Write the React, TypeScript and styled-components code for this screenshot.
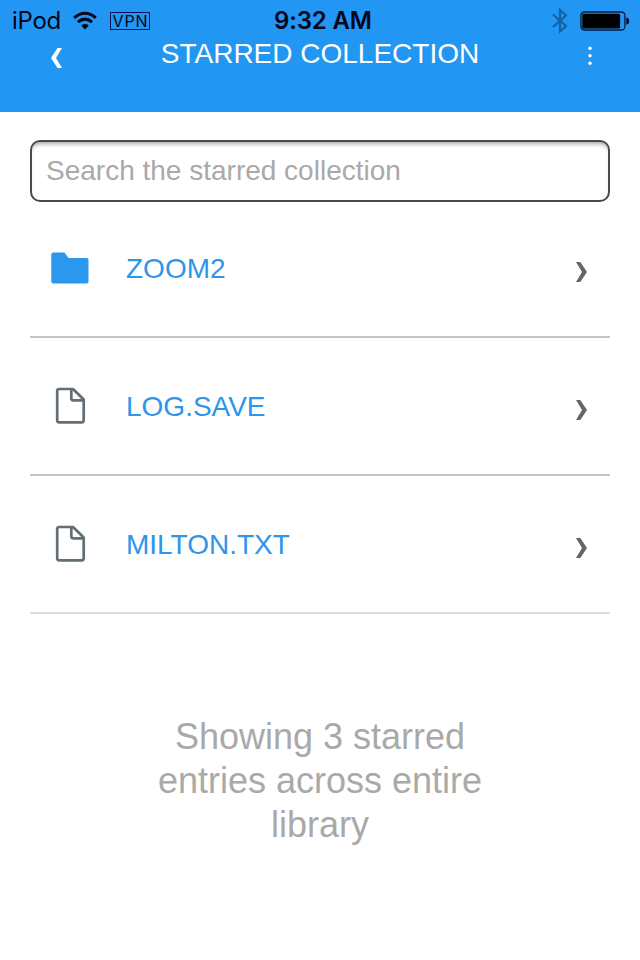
import React from "react";
import styled, { createGlobalStyle } from "styled-components";

const GlobalStyle = createGlobalStyle`
  * { box-sizing: border-box; }
  body { margin: 0; background: #fff; }
`;

const Screen = styled.div`
  width: 640px;
  height: 960px;
  overflow: hidden;
  background: #fff;
  font-family: "Liberation Sans", Arial, sans-serif;
`;

const Header = styled.header`
  height: 112px;
  background: #2196f3;
`;

const StatusBar = styled.div`
  display: grid;
  grid-template-columns: 262px 1fr 256px;
  align-items: center;
  height: 40px;
  padding: 0 10px 0 12px;
  color: #05061a;
  font: 400 24px/40px Inter, sans-serif;
`;

const StatusGroup = styled.div<{ $end?: boolean }>`
  display: flex;
  align-items: center;
  justify-content: ${(p) => (p.$end ? "flex-end" : "flex-start")};
  gap: ${(p) => (p.$end ? "12px" : "0")};
  height: 40px;
`;

const Device = styled.span`
  width: 60px;
  letter-spacing: -0.3px;
  line-height: 42px;
`;

const Vpn = styled.span`
  width: 40px;
  height: 18px;
  margin-left: 12px;
  border: 1px solid #12105a;
  text-align: center;
  font-size: 16px;
  line-height: 17px;
  letter-spacing: 0.9px;
  text-indent: 1px;
`;

const Clock = styled.span`
  font-weight: 600;
  letter-spacing: -0.15px;
  line-height: 42px;
  white-space: nowrap;
`;

const TitleBar = styled.div`
  display: grid;
  grid-template-columns: 112px 1fr 112px;
  height: 36px;
`;

const Title = styled.h1`
  margin: 0;
  color: #fff;
  font-size: 28px;
  font-weight: 400;
  line-height: 27px;
  text-align: center;
  white-space: nowrap;
`;

const NavButton = styled.button<{ $side: "left" | "right" }>`
  display: flex;
  justify-content: ${(p) => (p.$side === "left" ? "flex-start" : "flex-end")};
  padding: ${(p) => (p.$side === "left" ? "7px 0 0 50px" : "6px 48px 0 0")};
  border: 0;
  background: none;
  color: #fff;
`;

const Content = styled.main`
  padding: 28px 30px 0;
`;

const Search = styled.input`
  display: block;
  width: 580px;
  height: 62px;
  padding: 0 14px;
  border: 2px solid #4a4a4c;
  border-radius: 10px;
  box-shadow: inset 0 5px 4px -3px rgba(0, 0, 0, 0.35);
  background: #fff;
  font: 28px "Liberation Sans", Arial, sans-serif;
  outline: none;
  &::placeholder { color: #a9a9a9; opacity: 1; }
`;

const List = styled.ul`
  margin: -2px 0 0;
  padding: 0;
  list-style: none;
`;

const Row = styled.li`
  display: grid;
  grid-template-columns: 96px 1fr auto;
  align-items: center;
  height: 138px;
  padding-right: 22px;
  border-bottom: 2px solid #c4c4c6;
  &:last-child { border-bottom-color: #dedee0; }
`;

const IconCell = styled.span`
  display: flex;
  padding-left: 20px;
  filter: blur(0.6px);
`;

const Name = styled.span`
  padding-top: 2px;
  color: #2d95ea;
  font-size: 28px;
  line-height: 32px;
`;

const Disclosure = styled.span`
  display: flex;
  padding-top: 8px;
`;

const Summary = styled.p`
  width: 340px;
  margin: 101px auto 0;
  color: #a9a9a9;
  font-size: 36px;
  line-height: 44px;
  text-align: center;
`;

const WifiIcon = () => (
  <svg width="26" height="20" viewBox="0 0 26 20" fill="none" stroke="#05061a" strokeWidth="3">
    <path d="M2.2 6.8Q13-2.2 23.8 6.8" />
    <path d="M5.9 11.1Q13 5.1 20.1 11.1" />
    <path d="M13 18.6L9.2 14.6Q13 11 16.8 14.6Z" fill="#05061a" stroke="none" />
  </svg>
);

const BluetoothIcon = () => (
  <svg width="16" height="28" viewBox="0 0 16 28" fill="none" stroke="#1262a5" strokeWidth="2.2">
    <path d="M1 7.5L14 19L8 24.5V3L14 8.5L1 20" />
  </svg>
);

const BatteryIcon = () => (
  <svg width="50" height="20" viewBox="0 0 50 20">
    <rect x="0.9" y="1" width="44" height="18" rx="3.5" fill="none" stroke="#091a3c" strokeWidth="1.3" />
    <rect x="2.3" y="2.7" width="37.8" height="14.8" rx="1.2" fill="#000" />
    <path d="M46.3 6.4Q49.2 7 49.2 10T46.3 13.6Z" fill="#05061a" />
  </svg>
);

const BackIcon = () => (
  <svg width="13" height="22" viewBox="0 0 13 22" fill="#fff">
    <path d="M7.5 1H12L6 11L12 21H7.5L1 11Z" />
  </svg>
);

const MoreIcon = () => (
  <svg width="4" height="22" viewBox="0 0 4 22" fill="#fff">
    <circle cx="2" cy="2.3" r="1.7" />
    <circle cx="2" cy="9.8" r="1.7" />
    <circle cx="2" cy="17.3" r="1.7" />
  </svg>
);

const ForwardIcon = () => (
  <svg width="13" height="22" viewBox="0 0 13 22" fill="#666">
    <path d="M1 1H5.3L12 11L5.3 21H1L7 11Z" />
  </svg>
);

const FolderIcon = () => (
  <svg width="40" height="34" viewBox="0 0 40 34" fill="#2b98f0">
    <path d="M3 1.5H14.5L18.5 7H36.8Q38.5 7 38.5 8.7V30.8Q38.5 32.5 36.8 32.5H3Q1.3 32.5 1.3 30.8V3.2Q1.3 1.5 3 1.5Z" />
  </svg>
);

const FileIcon = () => (
  <svg width="40" height="40" viewBox="0 0 40 40" fill="none" stroke="#626e75" strokeWidth="2.7" strokeLinejoin="round">
    <path d="M9.2 3H23L33.7 13.5V34.3Q33.7 36.3 31.7 36.3H9.2Q7.2 36.3 7.2 34.3V5Q7.2 3 9.2 3ZM21.3 3.5V12.3Q21.3 14.3 23.3 14.3H33.5" />
  </svg>
);

type Entry = { name: string; kind: "folder" | "file" };

const entries: Entry[] = [
  { name: "ZOOM2", kind: "folder" },
  { name: "LOG.SAVE", kind: "file" },
  { name: "MILTON.TXT", kind: "file" },
];

export default function App() {
  return (
    <Screen>
      <GlobalStyle />
      <Header>
        <StatusBar>
          <StatusGroup>
            <Device>iPod</Device>
            <WifiIcon />
            <Vpn>VPN</Vpn>
          </StatusGroup>
          <Clock>9:32 AM</Clock>
          <StatusGroup $end>
            <BluetoothIcon />
            <BatteryIcon />
          </StatusGroup>
        </StatusBar>
        <TitleBar>
          <NavButton $side="left" aria-label="Back"><BackIcon /></NavButton>
          <Title>STARRED COLLECTION</Title>
          <NavButton $side="right" aria-label="More"><MoreIcon /></NavButton>
        </TitleBar>
      </Header>
      <Content>
        <Search placeholder="Search the starred collection" />
        <List>
          {entries.map((entry) => (
            <Row key={entry.name}>
              <IconCell>{entry.kind === "folder" ? <FolderIcon /> : <FileIcon />}</IconCell>
              <Name>{entry.name}</Name>
              <Disclosure><ForwardIcon /></Disclosure>
            </Row>
          ))}
        </List>
        <Summary>Showing 3 starred entries across entire library</Summary>
      </Content>
    </Screen>
  );
}
